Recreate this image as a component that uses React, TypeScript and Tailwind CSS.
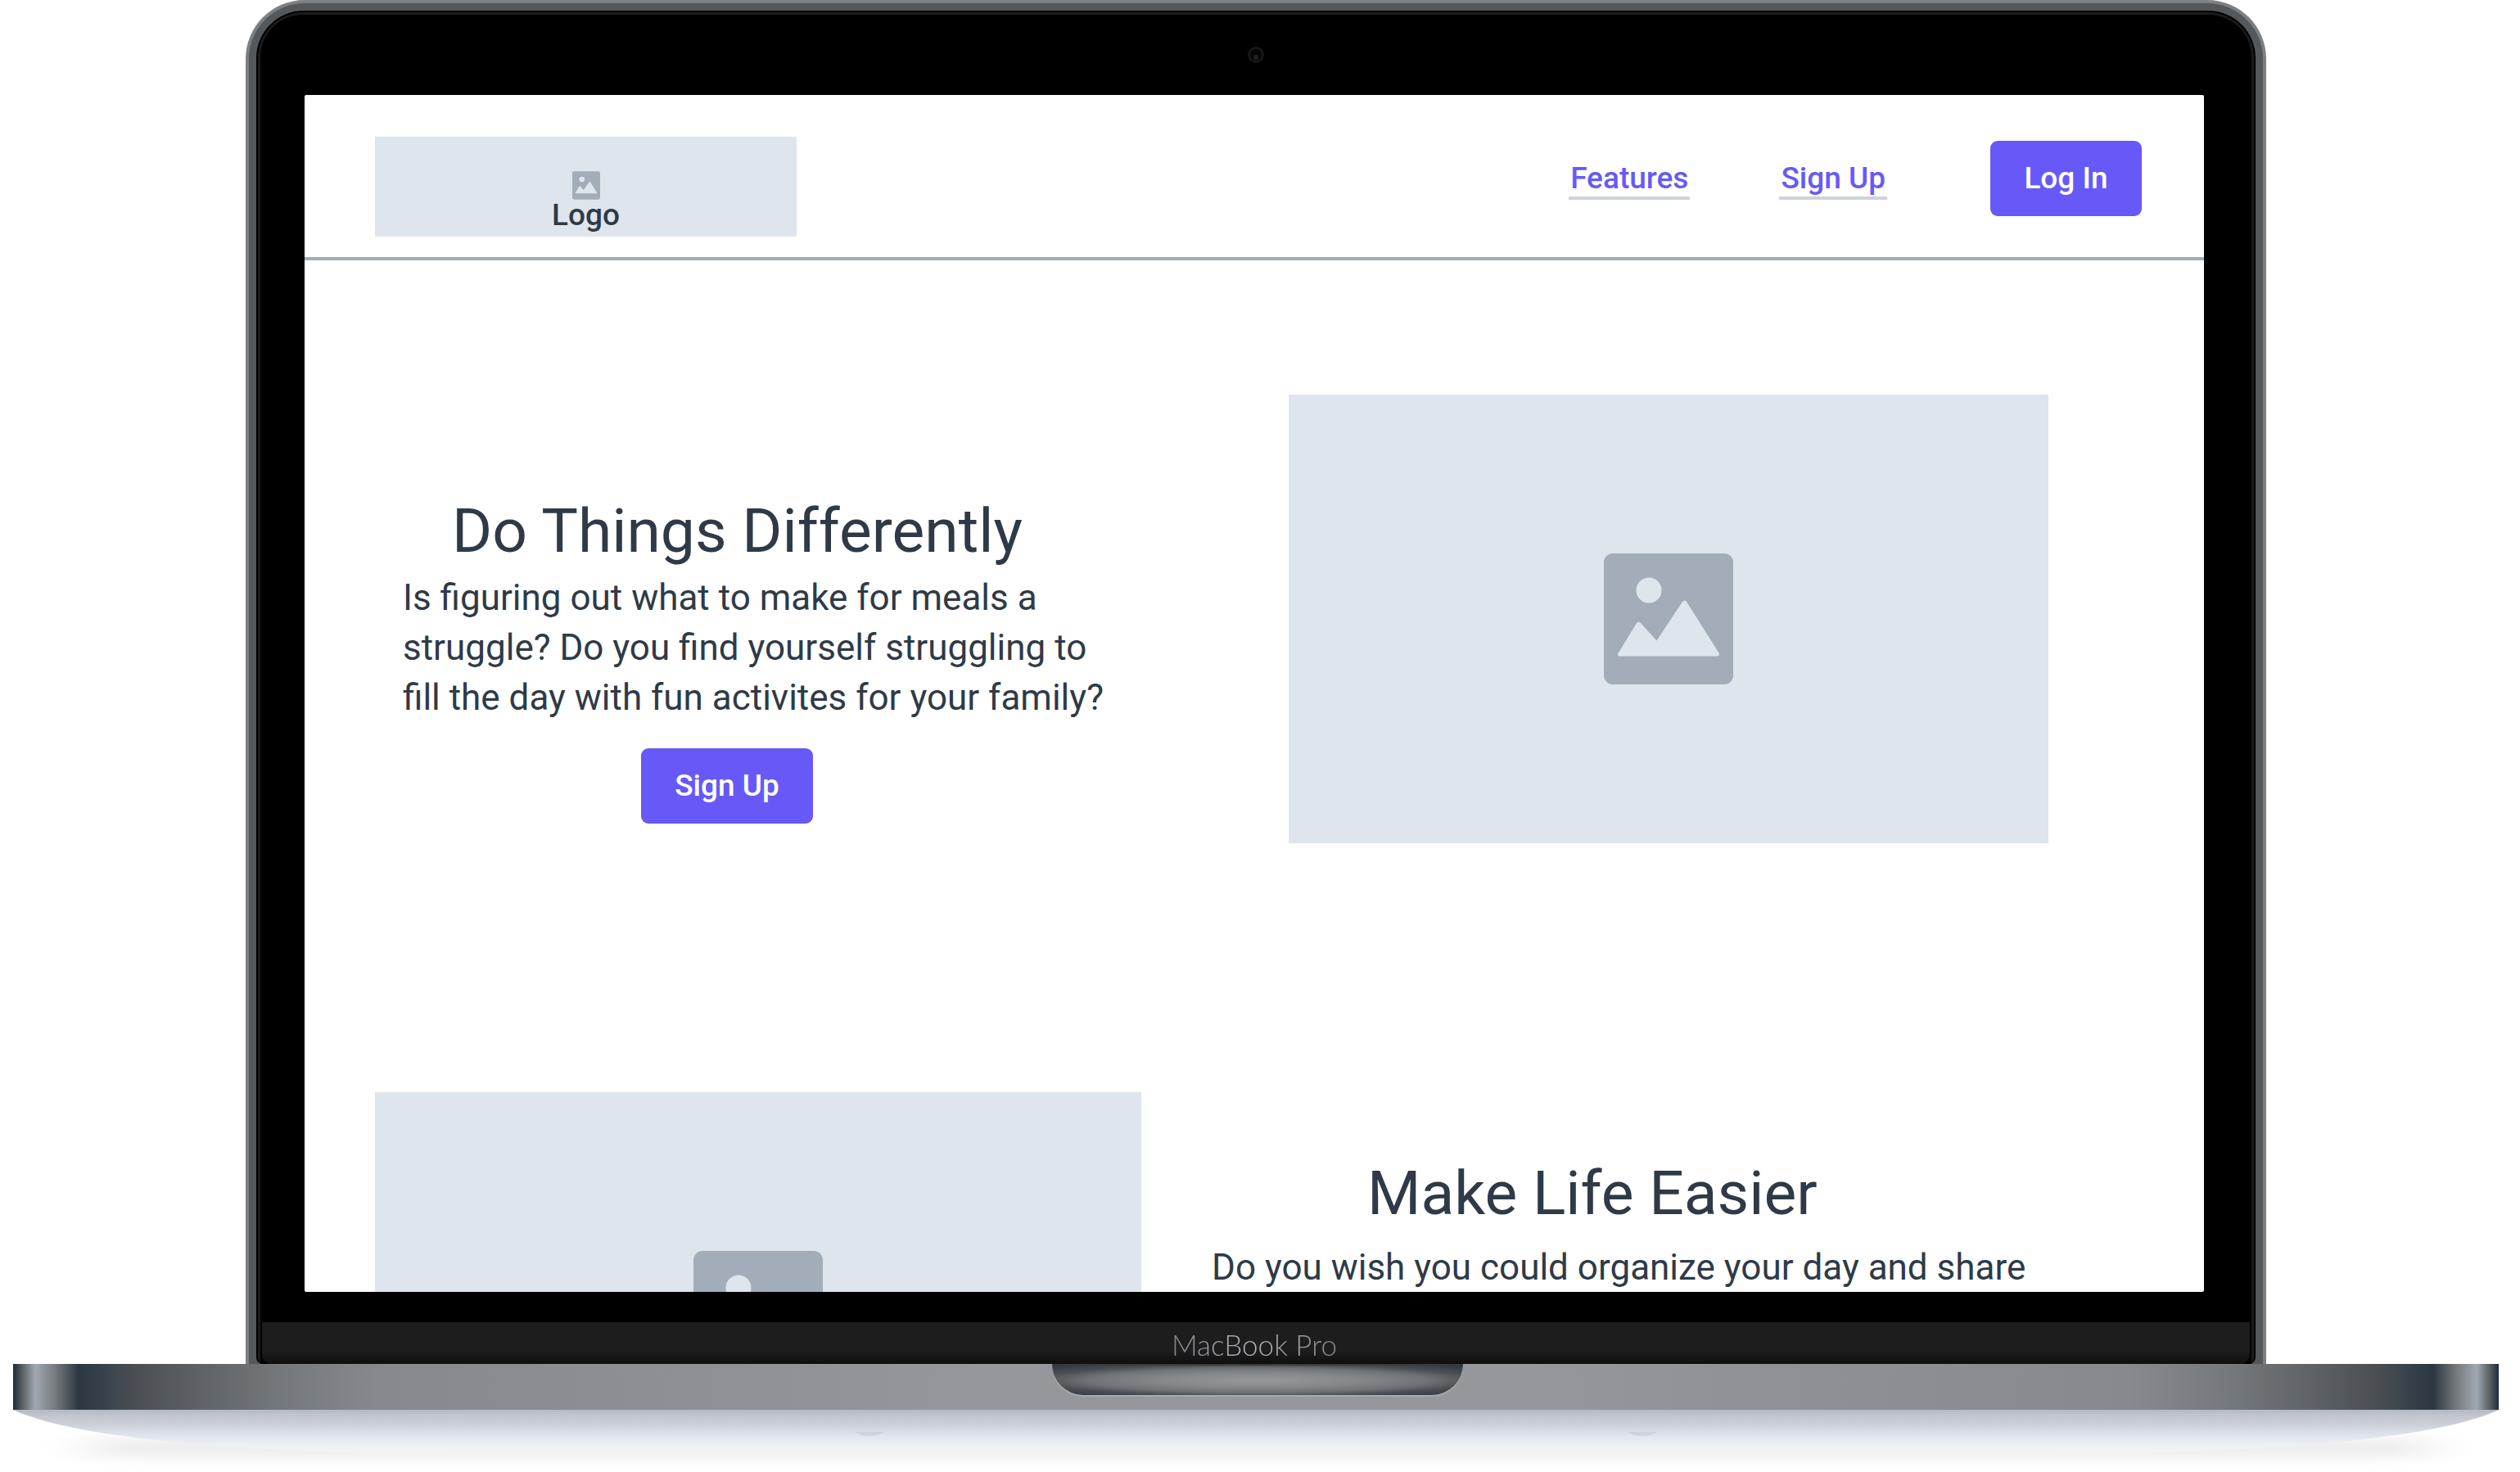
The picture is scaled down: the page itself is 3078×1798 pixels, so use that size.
import type { ReactNode } from "react";

function ImageGlyph({ className }: { className: string }) {
  return (
    <svg viewBox="0 0 158 160" className={className} aria-hidden="true">
      <rect width="158" height="160" rx="11" fill="#a2adb9" />
      <circle cx="55" cy="45" r="15.5" fill="#dfe5ed" />
      <path
        d="M19 125.500 Q16 125.500 17.500 122 L40 85 Q42 82.500 45 85 L64.500 106.500 L96 59 Q98.500 56 101 59 L140.500 121.500 Q142 125.500 138.500 125.500 Z"
        fill="#dfe5ed"
      />
    </svg>
  );
}

function Placeholder({ className }: { className: string }) {
  return (
    <div className={`flex items-center justify-center bg-[#dfe5ed] ${className}`}>
      <ImageGlyph className="h-[160px] w-[158px]" />
    </div>
  );
}

function NavLink({ children }: { children: ReactNode }) {
  return (
    <a
      href="#"
      className="border-b-4 border-[#ced2dc] px-[2px] pt-[4px] text-[37px] leading-[44px] font-medium text-[#665af6]"
    >
      {children}
    </a>
  );
}

function PrimaryButton({ children, className }: { children: ReactNode; className: string }) {
  return (
    <button
      type="button"
      className={`h-[92px] rounded-[9px] bg-[#6759f8] text-[37px] font-medium text-white ${className}`}
    >
      {children}
    </button>
  );
}

function Page() {
  return (
    <div className="min-h-0 flex-1 overflow-hidden rounded-[2px] bg-white font-['Roboto',sans-serif] text-[#2f3a46]">
      <header className="flex items-start border-b-4 border-[#a2adb9] pt-[51px] pr-[76px] pb-[25px] pl-[86px]">
        <div className="flex h-[122px] w-[515px] flex-col items-center bg-[#dfe5ed] pt-[42px]">
          <ImageGlyph className="h-[35px] w-[34px]" />
          <span className="text-[37px] leading-[38px] font-medium">Logo</span>
        </div>
        <nav className="mt-[5px] ml-auto flex items-center">
          <NavLink>Features</NavLink>
          <div className="ml-[109px] flex">
            <NavLink>Sign Up</NavLink>
          </div>
          <PrimaryButton className="ml-[126px] w-[185px]">Log In</PrimaryButton>
        </nav>
      </header>

      <section className="grid grid-cols-[936fr_928fr] gap-[180px] pt-[164px] pr-[190px] pl-[86px]">
        <div className="flex flex-col items-start pt-[122px]">
          <h1 className="ml-[94px] text-[75px] leading-[88px] whitespace-nowrap">Do Things Differently</h1>
          <p className="mt-[8px] ml-[34px] text-[44px] leading-[61px] whitespace-nowrap">
            Is figuring out what to make for meals a
            <br />
            struggle? Do you find yourself struggling to
            <br />
            fill the day with fun activites for your family?
          </p>
          <PrimaryButton className="mt-[31px] ml-[325px] w-[210px]">Sign Up</PrimaryButton>
        </div>
        <Placeholder className="h-[548px]" />
      </section>

      <section className="grid grid-cols-[936fr_1108fr] gap-[84px] pt-[304px] pr-[106px] pl-[86px]">
        <Placeholder className="h-[548px]" />
        <div className="flex flex-col items-start pt-[79px]">
          <h2 className="ml-[192px] text-[75px] leading-[88px] whitespace-nowrap">Make Life Easier</h2>
          <p className="mt-[17px] ml-[2px] text-[44px] leading-[61px] whitespace-nowrap">
            Do you wish you could organize your day and share
          </p>
        </div>
      </section>
    </div>
  );
}

function Camera() {
  return (
    <svg viewBox="0 0 20 20" className="size-[20px]" aria-hidden="true">
      <circle cx="10" cy="10" r="8.500" fill="#050505" stroke="#161617" strokeWidth="3" />
      <circle cx="10" cy="13" r="3" fill="#1f2023" />
    </svg>
  );
}

function Lid() {
  return (
    <div className="flex min-h-0 flex-1 flex-col pr-[310px] pl-[300px]">
      <div className="flex min-h-0 flex-1 flex-col rounded-t-[72px] border-x-4 border-t-4 border-[#7d8083] bg-[#54585b]">
        <div className="flex min-h-0 flex-1 flex-col px-[9px] pt-[9px]">
          <div className="flex min-h-0 flex-1 flex-col rounded-t-[58px] rounded-b-[8px] border-x-2 border-t-2 border-black bg-[#1b1b1c] px-[3px] pt-[3px]">
            <div className="flex min-h-0 flex-1 flex-col overflow-hidden rounded-t-[52px] bg-black">
              <div className="flex h-[98px] shrink-0 items-center justify-center">
                <Camera />
              </div>
              <div className="flex min-h-0 flex-1 pr-[58px] pl-[54px]">
                <Page />
              </div>
              <div className="h-[37px] shrink-0" />
              <div className="mr-[2px] ml-[2px] flex h-[51px] shrink-0 items-center justify-center rounded-b-[12px] bg-linear-to-b from-[#1d1d1e] from-70% to-[#0e0e0f] pt-[2px] pr-[4px]">
                <span className="bg-linear-to-r from-[#85898d] via-[#b4b6ba] to-[#85898d] bg-clip-text font-['Lato',sans-serif] text-[35px] leading-[42px] font-light text-transparent">
                  MacBook Pro
                </span>
              </div>
            </div>
          </div>
        </div>
      </div>
    </div>
  );
}

function Base() {
  return (
    <div className="mr-[26px] ml-[16px] flex h-[56px] shrink-0 justify-center bg-[linear-gradient(90deg,#1d2a38_0px,#5f6366_12px,#a0a9b3_27px,#75797c_52px,#2c3640_80px,#38424c_110px,#4b4f52_150px,#5f6366_230px,#75797c_330px,#88898d_450px,#96979b_1200px,#96979b_calc(100%_-_1200px),#88898d_calc(100%_-_450px),#75797c_calc(100%_-_330px),#5f6366_calc(100%_-_230px),#4b4f52_calc(100%_-_150px),#38424c_calc(100%_-_110px),#2c3640_calc(100%_-_80px),#75797c_calc(100%_-_52px),#a0a9b3_calc(100%_-_27px),#5f6366_calc(100%_-_12px),#1d2a38_100%)] pl-[4px]">
      <div className="h-[38px] w-[502px] rounded-b-[38px] border-t-2 border-[#3a3a3c] bg-[radial-gradient(ellipse_at_center,#96979b_0%,#85878a_35%,#6f7375_58%,#4b4f52_75%,#2c3640_100%)] shadow-[0_2px_1px_#a2adb9]" />
    </div>
  );
}

function Underside() {
  return (
    <svg viewBox="0 0 3078 76" preserveAspectRatio="none" className="h-[76px] w-full shrink-0" aria-hidden="true">
      <defs>
        <linearGradient id="under" x1="0" y1="0" x2="0" y2="57" gradientUnits="userSpaceOnUse">
          <stop offset="0" stopColor="#b2bac5" />
          <stop offset="0.16" stopColor="#c6c8d0" />
          <stop offset="0.3" stopColor="#cbced6" />
          <stop offset="0.55" stopColor="#dfe5ed" />
          <stop offset="0.8" stopColor="#f2f2f3" />
          <stop offset="1" stopColor="#f4f4f4" />
        </linearGradient>
        <filter id="soft" x="-5%" y="-50%" width="110%" height="200%">
          <feGaussianBlur stdDeviation="36 7" />
        </filter>
      </defs>
      <rect x="110" y="34" width="2854" height="25" rx="12" fill="#ededed" filter="url(#soft)" />
      <path
        d="M16 0 C60 20 130 31 220 40 C350 52 500 57 760 57 H2308 C2568 57 2718 52 2848 40 C2938 31 3008 20 3052 0 Z"
        fill="url(#under)"
      />
      <g fill="#c6c8d0">
        <path d="M1044 27 H1080 Q1074 32 1062 32 Q1050 32 1044 27 Z" fillOpacity="0.6" />
        <path d="M1988 27 H2024 Q2018 32 2006 32 Q1994 32 1988 27 Z" fillOpacity="0.6" />
      </g>
    </svg>
  );
}

export default function App() {
  return (
    <main className="flex h-screen flex-col overflow-hidden bg-white">
      <Lid />
      <Base />
      <Underside />
    </main>
  );
}
